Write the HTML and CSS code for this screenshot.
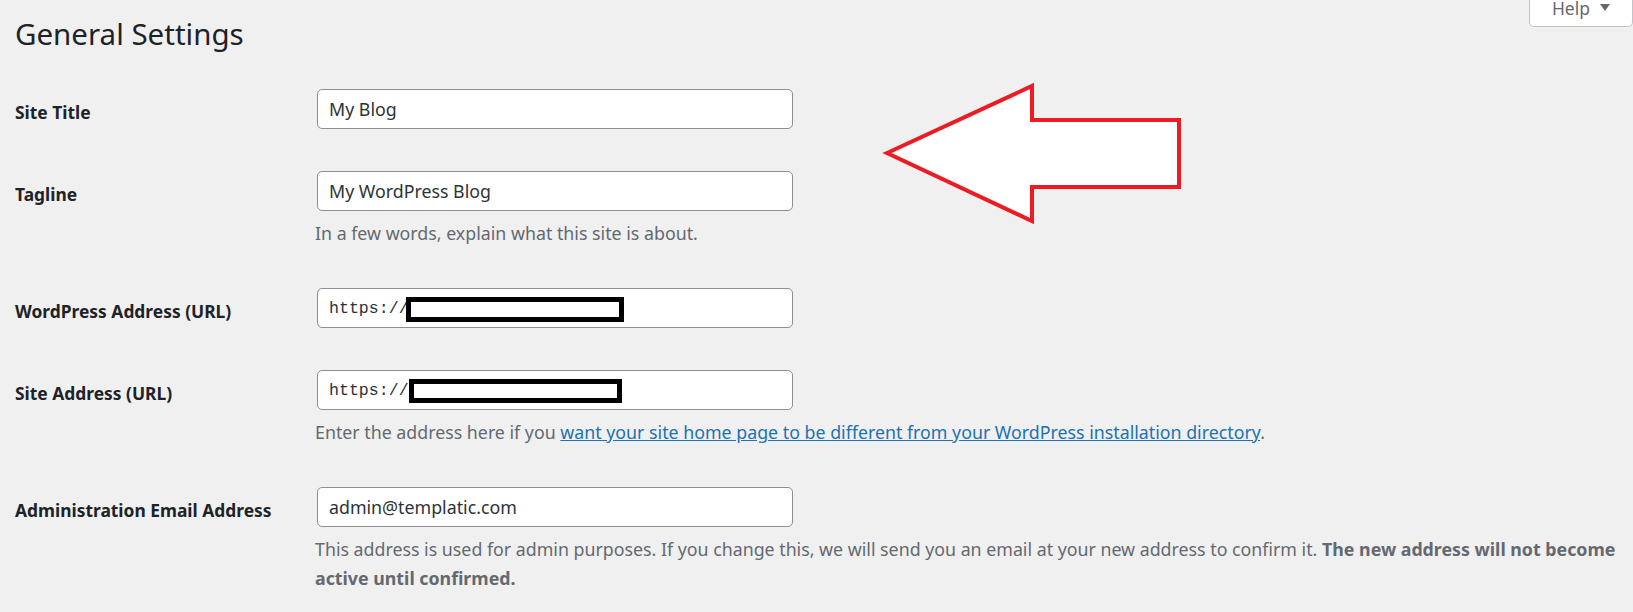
FILE: index.html
```html
<!DOCTYPE html>
<html lang="en">
<head>
<meta charset="utf-8">
<title>General Settings</title>
<link rel="stylesheet" href="styles.css">
</head>
<body>
<div class="page">
  <header class="header">
    <h1 class="title">General Settings</h1>
    <button class="help" type="button">Help <span class="caret"></span></button>
  </header>

  <form class="settings">
    <div class="row">
      <label class="label" for="blogname">Site Title</label>
      <div class="field">
        <input class="text-input" id="blogname" type="text" value="My Blog">
      </div>
    </div>

    <div class="row has-desc">
      <label class="label" for="tagline">Tagline</label>
      <div class="field">
        <input class="text-input" id="tagline" type="text" value="My WordPress Blog">
        <p class="desc">In a few words, explain what this site is about.</p>
      </div>
    </div>

    <div class="row">
      <label class="label" for="siteurl">WordPress Address (URL)</label>
      <div class="field">
        <div class="url-wrap">
          <input class="text-input code" id="siteurl" type="text" value="https://">
          <span class="redact redact-a"></span>
        </div>
      </div>
    </div>

    <div class="row has-desc">
      <label class="label" for="home">Site Address (URL)</label>
      <div class="field">
        <div class="url-wrap">
          <input class="text-input code" id="home" type="text" value="https://">
          <span class="redact redact-b"></span>
        </div>
        <p class="desc">Enter the address here if you <a class="link" href="#">want your site home page to be different from your WordPress installation directory</a>.</p>
      </div>
    </div>

    <div class="row has-desc">
      <label class="label" for="email">Administration Email Address</label>
      <div class="field">
        <input class="text-input" id="email" type="text" value="admin@templatic.com">
        <p class="desc">This address is used for admin purposes. If you change this, we will send you an email at your new address to confirm it. <strong>The new address will not become active until confirmed.</strong></p>
      </div>
    </div>
  </form>

  <svg class="arrow" width="308" height="152" viewBox="0 0 308 152" aria-hidden="true">
    <polygon points="9,76 154,9 154,43 301,43 301,110 154,110 154,144" fill="#ffffff" stroke="#ed1c24" stroke-width="4" stroke-linejoin="miter" stroke-miterlimit="3"/>
  </svg>
</div>
</body>
</html>
```

FILE: styles.css
```css
html, body {
  margin: 0;
  padding: 0;
  background: #f0f0f1;
}

body {
  font-family: "Segoe UI", "Noto Sans", "Open Sans", sans-serif;
  color: #1d2327;
  font-size: 17.5px;
}

.page {
  position: relative;
  padding: 0 0 0 15px;
  min-height: 612px;
  box-sizing: border-box;
}

.header {
  display: flex;
  justify-content: space-between;
  align-items: flex-start;
}

.title {
  margin: 15px 0 15px 0;
  font-size: 29.5px;
  font-weight: 400;
  line-height: 38px;
  color: #1d2327;
}

.help {
  display: flex;
  align-items: center;
  gap: 10px;
  margin-top: -10px;
  height: 37px;
  padding: 0 22px 0 22px;
  background: #ffffff;
  border: 1px solid #c3c4c7;
  border-top: none;
  border-radius: 0 0 5px 5px;
  font-family: inherit;
  font-size: 17.5px;
  line-height: 24px;
  color: #646970;
  box-sizing: border-box;
}

.caret {
  width: 0;
  height: 0;
  border-left: 5px solid transparent;
  border-right: 5px solid transparent;
  border-top: 7px solid #646970;
  margin-top: -1px;
}

.settings {
  display: flex;
  flex-direction: column;
}

.row {
  display: grid;
  grid-template-columns: 300px 1fr;
  padding: 21px 0;
}

.row.has-desc {
  padding-bottom: 19px;
}

.label {
  padding-top: 11px;
  font-size: 17.4px;
  font-weight: 700;
  line-height: 24px;
  color: #1d2327;
}

.field {
  display: flex;
  flex-direction: column;
  align-items: flex-start;
}

.text-input {
  margin: 0 0 0 2px;
  width: 476px;
  height: 40px;
  box-sizing: border-box;
  padding: 0 11px;
  background: #ffffff;
  border: 1px solid #8c8f94;
  border-radius: 5px;
  font-family: inherit;
  font-size: 17.8px;
  color: #2c3338;
  outline: none;
}

.text-input.code {
  font-family: Consolas, "Liberation Mono", "DejaVu Sans Mono", monospace;
  font-size: 16.6px;
}

.url-wrap {
  position: relative;
}

.redact {
  position: absolute;
  top: 9px;
  box-sizing: border-box;
  background: #ffffff;
  border: 5px solid #000000;
}

.redact-a {
  left: 91px;
  width: 218px;
  height: 25px;
}

.redact-b {
  left: 94px;
  width: 213px;
  height: 24px;
}

.desc {
  margin: 8px 0 0 0;
  line-height: 29px;
  font-size: 17.8px;
  color: #646970;
}

.desc strong {
  font-weight: 700;
}

.link {
  color: #2271b1;
  text-decoration: underline;
}

.arrow {
  position: absolute;
  left: 878px;
  top: 77px;
  pointer-events: none;
}
```
